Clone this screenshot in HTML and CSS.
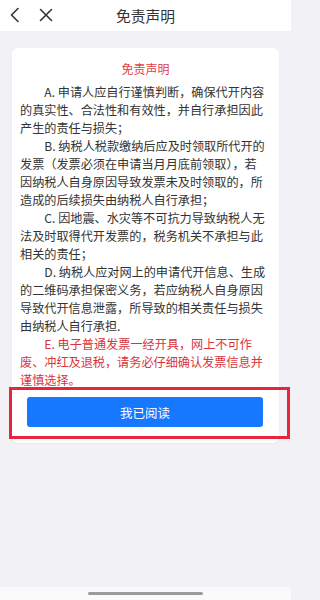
FILE: index.html
```html
<!DOCTYPE html>
<html lang="zh-CN">
<head>
<meta charset="utf-8">
<title>免责声明</title>
<link rel="stylesheet" href="styles.css">
</head>
<body>
<div class="screen">
  <header class="topbar">
    <div class="nav-icons">
      <svg class="icon" width="14" height="16" viewBox="0 0 14 16"><polyline points="10,1.5 3.5,8 10,14.5" fill="none" stroke="#333" stroke-width="1.6" stroke-linecap="round" stroke-linejoin="round"/></svg>
      <svg class="icon" width="16" height="16" viewBox="0 0 16 16"><path d="M2.5 2.5 L13.5 13.5 M13.5 2.5 L2.5 13.5" fill="none" stroke="#333" stroke-width="1.6" stroke-linecap="round"/></svg>
    </div>
    <h1 class="title">免责声明</h1>
  </header>
  <main class="content">
    <section class="card">
      <h2 class="card-title">免责声明</h2>
      <div class="terms">
        <p class="para">A. 申请人应自行谨慎判断，确保代开内容<br>的真实性、合法性和有效性，并自行承担因此<br>产生的责任与损失；</p>
        <p class="para">B. 纳税人税款缴纳后应及时领取所代开的<br>发票（发票必须在申请当月月底前领取），若<br>因纳税人自身原因导致发票未及时领取的，所<br>造成的后续损失由纳税人自行承担；</p>
        <p class="para">C. 因地震、水灾等不可抗力导致纳税人无<br>法及时取得代开发票的，税务机关不承担与此<br>相关的责任；</p>
        <p class="para">D. 纳税人应对网上的申请代开信息、生成<br>的二维码承担保密义务，若应纳税人自身原因<br>导致代开信息泄露，所导致的相关责任与损失<br>由纳税人自行承担.</p>
        <p class="para warn">E. 电子普通发票一经开具，网上不可作<br>废、冲红及退税，请务必仔细确认发票信息并<br>谨慎选择。</p>
      </div>
      <div class="action">
        <button class="btn" type="button">我已阅读</button>
        <div class="highlight"></div>
      </div>
    </section>
  </main>
  <footer class="homebar"><span class="indicator"></span></footer>
</div>
</body>
</html>
```

FILE: styles.css
```css
* { box-sizing: border-box; }
html, body {
  margin: 0;
  padding: 0;
}
body {
  font-family: "Noto Sans CJK SC", "Noto Sans", sans-serif;
  background: #f1f1f6;
  color: #333;
}
.screen {
  width: 291px;
  height: 600px;
  display: flex;
  flex-direction: column;
  overflow: hidden;
}
.topbar {
  height: 31px;
  flex: none;
  background: #fff;
  display: flex;
  align-items: center;
  justify-content: center;
  position: relative;
}
.nav-icons {
  position: absolute;
  left: 8px;
  top: 7px;
  display: flex;
  gap: 16px;
  align-items: center;
}
.icon { display: block; }
.title {
  margin: 0;
  font-size: 14.8px;
  font-weight: 400;
  color: #333;
  line-height: 20px;
}
.content {
  flex: 1;
  padding: 17px 12px 0;
}
.card {
  background: #fff;
  border-radius: 6px;
  padding: 12px 8px 16px;
  box-shadow: 0 1px 2px rgba(0,0,0,0.04);
}
.card-title {
  margin: 0 0 5px;
  text-align: center;
  font-size: 12px;
  font-weight: 400;
  line-height: 18px;
  color: #e0403f;
}
.terms {
  font-size: 12.15px;
  line-height: 18px;
  color: #333;
}
.para {
  margin: 0;
  text-indent: 2em;
  white-space: nowrap;
}
.warn { color: #d9343b; }
.action {
  position: relative;
  margin-top: 8px;
  padding: 0 8px 0 7px;
}
.btn {
  display: block;
  width: 100%;
  height: 30px;
  border: none;
  border-radius: 3px;
  background: #1677ff;
  color: #fff;
  font-family: inherit;
  font-size: 12.5px;
  padding: 0;
}
.highlight {
  position: absolute;
  left: -11px;
  right: -19px;
  top: -10px;
  bottom: -12px;
  border: 3px solid #e8253c;
  pointer-events: none;
}
.homebar {
  height: 13px;
  flex: none;
  background: #fafafa;
  display: flex;
  justify-content: center;
  padding-top: 5px;
}
.indicator {
  width: 115px;
  height: 3px;
  border-radius: 2px;
  background: #9b9b9b;
}
```
